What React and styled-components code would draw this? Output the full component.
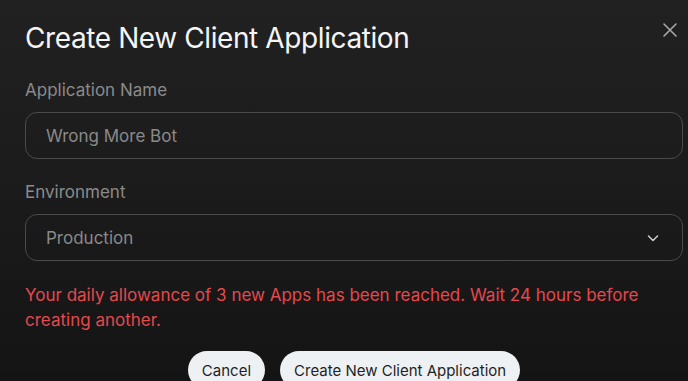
import React from 'react';
import styled, { createGlobalStyle } from 'styled-components';

const Global = createGlobalStyle`
  html, body {
    margin: 0;
    padding: 0;
    height: 100%;
    background: #161616;
  }
  body {
    font-family: Inter, "Noto Sans", sans-serif;
  }
`

const Modal = styled.div`
  position: relative;
  width: 688px;
  height: 381px;
  overflow: hidden;
  box-sizing: border-box;
  padding: 20px 5px 0 25px;
  background: linear-gradient(180deg, #212121 0%, #1b1b1b 50%, #141414 100%);
  display: flex;
  flex-direction: column;
`

const Title = styled.h1`
  margin: 0;
  font-size: 28px;
  font-weight: 400;
  letter-spacing: -0.4px;
  color: #f5f5f5;
  line-height: 36px;
`

const CloseButton = styled.button`
  position: absolute;
  top: 20px;
  right: 8px;
  width: 20px;
  height: 20px;
  padding: 0;
  border: none;
  background: transparent;
  color: #a8a8a8;
  cursor: pointer;
  display: flex;
  align-items: center;
  justify-content: center;
`

const Field = styled.div`
  display: flex;
  flex-direction: column;
  margin-top: ${p => p.top}px;
`

const Label = styled.label`
  font-size: 17px;
  color: #8b8b8b;
  line-height: 22px;
  margin-bottom: 11px;
`

const Box = styled.div`
  height: 47px;
  box-sizing: border-box;
  border: 1px solid #4a4a4a;
  border-radius: 12px;
  display: flex;
  align-items: center;
  justify-content: space-between;
  padding: 0 22px 0 20px;
  font-size: 17px;
  color: #8a8a8a;
`

const Chevron = styled.span`
  display: flex;
  color: #cfcfcf;
`

const ErrorText = styled.p`
  margin: 22px 0 0;
  font-size: 17px;
  line-height: 25px;
  color: #e5484d;
`

const Actions = styled.div`
  display: flex;
  justify-content: center;
  gap: 15px;
  margin-top: 18px;
`

const PillButton = styled.button`
  height: 38px;
  padding: 0 14px;
  border: none;
  border-radius: 19px;
  background: #eef1f3;
  color: #1f1f1f;
  font-family: Inter, "Noto Sans", sans-serif;
  font-size: 15px;
  cursor: pointer;
`

export default function App() {
  return (
    <>
      <Global />
      <Modal>
        <Title>Create New Client Application</Title>
        <CloseButton aria-label="Close">
          <svg width="16" height="16" viewBox="0 0 16 16" fill="none" stroke="currentColor" strokeWidth="1.6" strokeLinecap="round">
            <path d="M2 2 L14 14 M14 2 L2 14" />
          </svg>
        </CloseButton>

        <Field top={23}>
          <Label>Application Name</Label>
          <Box>Wrong More Bot</Box>
        </Field>

        <Field top={22}>
          <Label>Environment</Label>
          <Box>
            Production
            <Chevron>
              <svg width="14" height="14" viewBox="0 0 14 14" fill="none" stroke="currentColor" strokeWidth="1.5" strokeLinecap="round" strokeLinejoin="round">
                <path d="M2.5 5 L7 9.5 L11.5 5" />
              </svg>
            </Chevron>
          </Box>
        </Field>

        <ErrorText>
          Your daily allowance of 3 new Apps has been reached. Wait 24 hours before creating another.
        </ErrorText>

        <Actions>
          <PillButton>Cancel</PillButton>
          <PillButton>Create New Client Application</PillButton>
        </Actions>
      </Modal>
    </>
  );
}
